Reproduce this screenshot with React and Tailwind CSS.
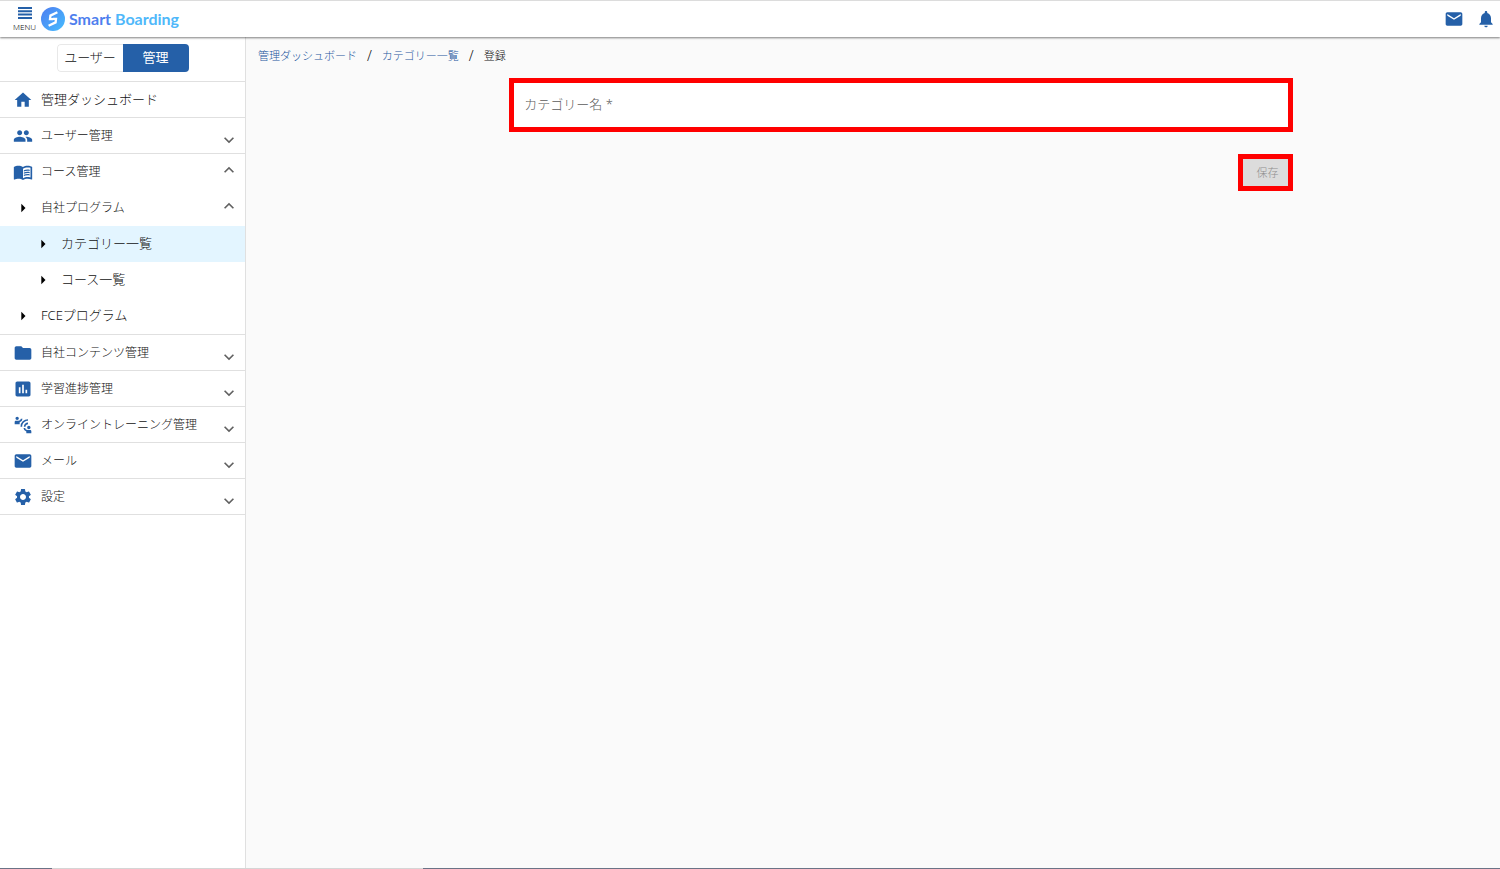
import { useState } from "react";
import {
  MdArrowRight,
  MdAssessment,
  MdConnectWithoutContact,
  MdEmail,
  MdExpandLess,
  MdExpandMore,
  MdFolder,
  MdHome,
  MdMenuBook,
  MdNotifications,
  MdPeople,
  MdSettings,
} from "react-icons/md";

const menuAfterCourses = [
  { label: "自社コンテンツ管理", icon: MdFolder },
  { label: "学習進捗管理", icon: MdAssessment },
  { label: "オンライントレーニング管理", icon: MdConnectWithoutContact },
  { label: "メール", icon: MdEmail },
  { label: "設定", icon: MdSettings },
];

export default function App() {
  const [name, setName] = useState("");

  return (
    <div className="flex min-h-screen flex-col bg-[#fafafa] font-['Noto_Sans','Noto_Sans_CJK_JP',sans-serif] font-light text-[#111]">
      <Header />

      <div className="flex flex-1">
        <Sidebar />

        <main className="min-w-0 flex-1">
          <nav aria-label="breadcrumb" className="px-3 pt-2">
            <ol className="flex h-[22px] items-center gap-2.5 text-[11px]">
              <li>
                <a href="#dashboard" className="text-[#1a56a0]">
                  管理ダッシュボード
                </a>
              </li>
              <li className="text-sm">/</li>
              <li>
                <a href="#categories" className="text-[#1a56a0]">
                  カテゴリー一覧
                </a>
              </li>
              <li className="text-sm">/</li>
              <li>登録</li>
            </ol>
          </nav>

          <form
            onSubmit={(e) => e.preventDefault()}
            className="mt-[11px] ml-[21%] w-5/8"
          >
            <div className="relative border-5 border-[#ff0000] bg-white">
              <input
                id="category-name"
                value={name}
                onChange={(e) => setName(e.target.value)}
                className="block h-11 w-full px-2.5 text-[13px] outline-none"
              />
              {!name && (
                <label
                  htmlFor="category-name"
                  className="pointer-events-none absolute inset-0 flex items-center px-2.5 text-[13px] text-[#5c5c5c]"
                >
                  カテゴリー名 *
                </label>
              )}
            </div>

            <div className="mt-[22px] flex justify-end">
              <button
                type="submit"
                disabled={!name}
                className="h-[37px] w-[55px] border-5 border-[#ff0000] bg-[#dcdcdc] pt-0.5 pl-1 text-[11px] text-[#8f8f8f]"
              >
                保存
              </button>
            </div>
          </form>
        </main>
      </div>

      <footer className="flex h-px bg-[#d5d5d5]">
        <div className="w-[52px] bg-[#6b7386]" />
        <div className="ml-[371px] flex-1 bg-[#6b7386]" />
      </footer>
    </div>
  );
}

function Header() {
  return (
    <header className="z-10 flex h-[37px] items-center justify-between border-t border-[#dcdcdc] bg-white pr-1 pl-3 shadow-[0_1px_2px_rgba(0,0,0,0.5)]">
      <div className="flex items-center gap-1">
        <button
          type="button"
          className="flex w-[25px] flex-col items-center gap-1"
        >
          <svg width="14" height="12" viewBox="0 0 14 12" fill="#2560a8">
            <path d="M0 0h14v2H0zM0 3.3h14v2H0zM0 6.6h14v2H0zM0 9.9h14v2H0z" />
          </svg>
          <span className="text-[8px] leading-2">MENU</span>
        </button>
        <a href="#home" className="flex items-center gap-1">
          <Logo />
          <span className="font-['Lato'] text-base font-bold text-[#4fb8fa]">
            <span className="text-[#4f7fee]">Smart</span> Boarding
          </span>
        </a>
      </div>

      <div className="flex items-center gap-3 text-[#2560a8]">
        <button type="button" aria-label="メール">
          <MdEmail size={20} />
        </button>
        <button type="button" aria-label="通知">
          <MdNotifications size={20} />
        </button>
      </div>
    </header>
  );
}

function Logo() {
  return (
    <svg width="24" height="24" viewBox="0 0 24 24" fill="none">
      <defs>
        <linearGradient id="logo" x1="0" y1="0" x2="1" y2="1">
          <stop offset="0" stopColor="#4f7df0" />
          <stop offset="1" stopColor="#45bdff" />
        </linearGradient>
      </defs>
      <circle cx="12" cy="12" r="12" fill="url(#logo)" />
      <path
        d="M16.4 5.2 9.4 8.6 9 12.2h3.2M7.6 18.8l7-3.4.4-3.6h-3.2"
        stroke="#fff"
        strokeWidth="2.3"
      />
    </svg>
  );
}

function Sidebar() {
  return (
    <aside className="w-[246px] shrink-0 border-r border-[#e0e0e0] bg-white">
      <div className="flex h-[45px] items-start justify-center border-b border-[#e0e0e0] pt-[7px]">
        <div className="flex h-7 overflow-hidden rounded-sm text-[13px]">
          <button
            type="button"
            className="w-[66px] rounded-l-sm border border-r-0 border-[#e8e8e8]"
          >
            ユーザー
          </button>
          <button
            type="button"
            className="w-[66px] bg-[#2560a8] font-normal text-white"
          >
            管理
          </button>
        </div>
      </div>

      <nav>
        <a
          href="#dashboard"
          className="flex h-9 items-center gap-2 border-b border-[#e0e0e0] px-[13px] text-[13px]"
        >
          <MdHome size={20} className="text-[#2560a8]" />
          管理ダッシュボード
        </a>
        <MenuItem label="ユーザー管理" icon={MdPeople} />

        <div className="border-b border-[#e0e0e0]">
          <button
            type="button"
            aria-expanded="true"
            className="flex h-9 w-full items-center gap-2 pr-1.5 pl-[13px] text-xs"
          >
            <MdMenuBook size={20} className="text-[#2560a8]" />
            コース管理
            <MdExpandLess size={20} className="mb-1 ml-auto text-[#616161]" />
          </button>
          <button
            type="button"
            aria-expanded="true"
            className="flex h-9 w-full items-center gap-2 pr-1.5 pl-[13px] text-xs"
          >
            <MdArrowRight size={20} className="text-black" />
            自社プログラム
            <MdExpandLess size={20} className="mb-1 ml-auto text-[#616161]" />
          </button>
          <a
            href="#categories"
            className="flex h-9 items-center gap-2 bg-[#e3f5ff] pl-[33px] text-[13px]"
          >
            <MdArrowRight size={20} className="text-black" />
            カテゴリー一覧
          </a>
          <a
            href="#courses"
            className="flex h-9 items-center gap-2 pl-[33px] text-[13px]"
          >
            <MdArrowRight size={20} className="text-black" />
            コース一覧
          </a>
          <a
            href="#fce"
            className="flex h-9 items-center gap-2 pl-[13px] text-[13px]"
          >
            <MdArrowRight size={20} className="text-black" />
            FCEプログラム
          </a>
        </div>

        {menuAfterCourses.map((item) => (
          <MenuItem key={item.label} {...item} />
        ))}
      </nav>
    </aside>
  );
}

function MenuItem({ label, icon: Icon }) {
  return (
    <button
      type="button"
      aria-expanded="false"
      className="flex h-9 w-full items-center gap-2 border-b border-[#e0e0e0] pr-1.5 pl-[13px] text-xs"
    >
      <Icon size={20} className="text-[#2560a8]" />
      {label}
      <MdExpandMore size={20} className="mt-2 ml-auto text-[#616161]" />
    </button>
  );
}
